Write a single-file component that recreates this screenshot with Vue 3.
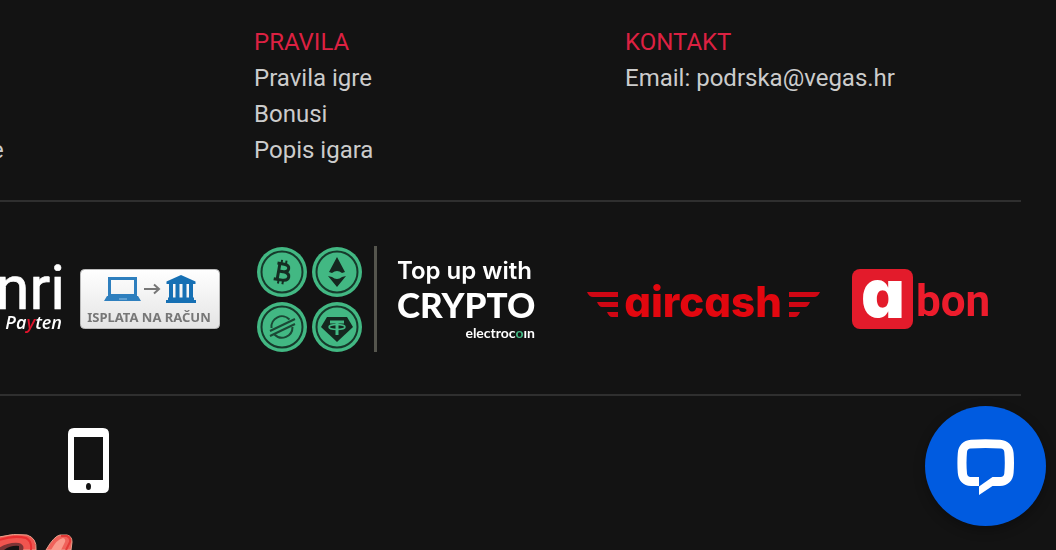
<script setup>
const rules = ['Pravila igre', 'Bonusi', 'Popis igara']
</script>

<template>
  <footer class="footer">
    <div class="inner">
      <nav class="columns">
        <ul class="edge">
          <li><a href="#">e</a></li>
        </ul>
        <section>
          <h2>PRAVILA</h2>
          <ul>
            <li v-for="rule in rules" :key="rule"><a href="#">{{ rule }}</a></li>
          </ul>
        </section>
        <section>
          <h2>KONTAKT</h2>
          <p>Email: <a href="mailto:podrska@vegas.hr">podrska@vegas.hr</a></p>
        </section>
      </nav>

      <div class="payments">
        <svg class="logo" width="64" height="106" viewBox="0 0 64 106" aria-label="Monri Payten">
          <text x="65" y="63" text-anchor="end" font-family="Roboto" font-size="61" fill="#fff" stroke="#fff" stroke-width="0.6">nri</text>
          <text x="62" y="83" text-anchor="end" font-family="Open Sans" font-size="18" font-weight="600" font-style="italic" fill="#fff">Pa<tspan fill="#e0142c">y</tspan>ten</text>
        </svg>

        <svg class="logo" width="140" height="60" viewBox="0 0 140 60" aria-label="Isplata na račun">
          <defs>
            <linearGradient id="plate" x1="0" y1="0" x2="0" y2="1">
              <stop offset="0" stop-color="#fff" />
              <stop offset="1" stop-color="#e4e4e4" />
            </linearGradient>
          </defs>
          <rect x="0.5" y="0.5" width="139" height="59" rx="4" fill="url(#plate)" stroke="#bbb" />
          <path d="M28 8h29v20H28zM31 11v14h23V11z" fill="#2e7fbe" fill-rule="evenodd" />
          <path d="M27 27h31l3 5H24z" fill="#2e7fbe" />
          <path d="M39 30h8" stroke="#8fc0e4" />
          <path d="M64 20h15M74 15.500l5 4.500-5 4.500" fill="none" stroke="#777" stroke-width="2" />
          <path d="M101 6l14.500 6.500v2.500h-29v-2.500zM89 15h4v14h-4zM95.500 15h4v14h-4zM102.500 15h4v14h-4zM109 15h4v14h-4zM88 28.500h26v2.500h2v3H86v-3h2z" fill="#1670b4" />
          <text x="69" y="53" text-anchor="middle" font-family="Noto Sans" font-size="13" font-weight="700" fill="#777">ISPLATA NA RAČUN</text>
        </svg>

        <svg class="logo" width="320" height="108" viewBox="0 0 320 108" aria-label="Top up with crypto, electrocoin">
          <g fill="#42b883">
            <circle cx="46" cy="27" r="25" /><circle cx="101" cy="27" r="25" />
            <circle cx="46" cy="82" r="25" /><circle cx="101" cy="82" r="25" />
          </g>
          <g fill="none" stroke="#163a2b" stroke-width="2">
            <circle cx="46" cy="27" r="20.500" /><circle cx="101" cy="27" r="20.500" />
            <circle cx="46" cy="82" r="20.500" /><circle cx="101" cy="82" r="20.500" />
          </g>
          <g transform="rotate(10 46 27)" fill="none" stroke="#152c22">
            <path d="M42.500 19.500v15M40 19h7q5 0 5 3.700t-5 3.800h-4.500h5q6 .3 6 4.300t-6 4.200H39" stroke-width="3" />
            <path d="M44 15v4M48.500 15v4M44 35v4M48.500 35v4" stroke-width="2" />
          </g>
          <path d="M101 12l8 15-3 1q-5-4-10 0l-3-1zM92 31l4 1q5 4 10 0l4-1-9 11z" fill="#15271f" />
          <g fill="none" stroke="#1b4835" stroke-width="2">
            <path d="M35.500 83a10.500 10.500 0 0 1 18-8.500M56.500 82a10.500 10.500 0 0 1-18 7.500" />
            <path d="M34 86l25-12M34 91l25-12" />
          </g>
          <path d="M91 72h20l6 10-16 15-16-15z" fill="#15271f" />
          <path d="M94 77h14M101 77v13" stroke="#42b883" stroke-width="3" />
          <ellipse cx="101" cy="82" rx="8" ry="2.500" fill="none" stroke="#42b883" stroke-width="1.500" />
          <rect x="138" y="1" width="3" height="106" fill="#55554d" />
          <g fill="#fff">
            <text x="161" y="34" font-family="Inter" font-size="24" font-weight="600">Top up with</text>
            <text x="161" y="73" font-family="Lato" font-size="35" font-weight="900">CRYPTO</text>
            <text x="299" y="93" font-family="Lato" font-size="14" font-weight="700" text-anchor="end">electroc<tspan fill="#42b883">o</tspan>ın</text>
          </g>
        </svg>

        <svg class="logo single" width="264" height="60" viewBox="0 0 264 60" aria-label="aircash">
          <g fill="#cf0714">
            <path d="M15 23h31v5H21q-4 0-6-5zM25 33h21v5H30q-3 0-5-5zM35 43h11v5h-6q-3 0-5-5z" />
            <path d="M248 23h-31v5h25q4 0 6-5zM238 33h-21v5h16q3 0 5-5zM228 43h-11v5h6q3 0 5-5z" />
          </g>
          <text x="131" y="48" text-anchor="middle" font-family="Inter" font-size="42" font-weight="800" fill="#e3070f">aircash</text>
        </svg>

        <svg class="logo single" width="138" height="60" viewBox="0 0 138 60" aria-label="abon">
          <rect width="61" height="60" rx="8" fill="#e31b2b" />
          <text x="31" y="49" text-anchor="middle" font-family="Inter" font-size="68" font-weight="900" fill="#fff">a</text>
          <text x="64" y="47" font-family="Roboto" font-size="44" font-weight="700" fill="#ec1c2c">bon</text>
        </svg>
      </div>

      <div class="apps">
        <a href="#" aria-label="Mobile">
          <svg width="41" height="65" viewBox="0 0 41 65">
            <path d="M6 0h29q6 0 6 6v53q0 6-6 6H6q-6 0-6-6V6q0-6 6-6zM6 9v43h29V9z" fill="#fff" fill-rule="evenodd" />
            <ellipse cx="20.500" cy="58.500" rx="2.500" ry="3.500" fill="#131313" />
          </svg>
        </a>
      </div>
    </div>

    <svg class="emblem" width="76" height="16" viewBox="0 0 76 16" aria-hidden="true">
      <path d="M-1 3Q14-1 27 1q10 3 9 15H-1z" fill="#f0554f" stroke="#e6a08c" />
      <path d="M-1 6Q14 1 26 4q6 3 5 12" fill="none" stroke="#e92f30" stroke-width="2" />
      <path d="M-1 14Q8 8 19 9q6 2 4 7H-1z" fill="#7d3435" />
      <path d="M4 16q7-5 15-4v4z" fill="#131313" />
      <path d="M46 16Q54 2 60 1h7q5 1 5 7l-1 8z" fill="#f0625a" stroke="#e6a08c" />
      <path d="M51 16Q57 5 63 4q4 1 1 6l-3 6z" fill="#fa9a8c" />
      <path d="M61 2h6q4 2 3 6l-4 8" fill="none" stroke="#e33b38" stroke-width="2" />
    </svg>
  </footer>

  <button class="chat" type="button" aria-label="Chat">
    <svg width="58" height="56" viewBox="0 0 58 56">
      <path d="M14 .8Q28.500-.4 43 .8C51 1.500 56 6.500 56.600 14q.8 10 0 20C56 42 51 46.600 43 47h-7.500L22 56v-9h-8C6 46.500 1.500 42 .8 34q-.8-10 0-20C1.500 6.500 6 1.500 14 .8zM13.500 9.500Q10.400 9.700 10 13q-1 11 0 21.500.4 3.200 3.500 3.500H22v9.500L35.500 38h8q3.500-.3 3.800-3.500 1-11 0-21.500-.3-3.300-3.800-3.500-15-1.200-30 0z" fill="#fff" fill-rule="evenodd" />
    </svg>
  </button>
</template>

<style>
body {
  margin: 0;
  background: #131313;
  overflow: hidden;
}
</style>

<style scoped>
.footer {
  background: #131313;
  color: #ccc;
  font: 24px/36px Roboto, sans-serif;
}
.inner {
  margin-right: 35px;
}
.columns {
  display: grid;
  grid-template-columns: 254px 371px 1fr;
  padding: 24px 0 32px;
  border-bottom: 2px solid #2f2f2f;
}
h2 {
  margin: 0;
  font: inherit;
  color: #dc2142;
}
p,
ul {
  margin: 0;
  padding: 0;
  list-style: none;
}
.edge {
  align-self: end;
  margin-left: -9px;
}
a {
  color: inherit;
  text-decoration: none;
}
.payments {
  display: flex;
  align-items: center;
  gap: 16px;
  padding: 43px 0 41px;
  border-bottom: 2px solid #2f2f2f;
}
.logo {
  flex: none;
  filter: blur(0.5px);
}
.single {
  font-feature-settings: "cv11";
}
.apps {
  padding: 32px 0 0 68px;
}
.apps a,
.apps svg,
.emblem {
  display: block;
}
.emblem {
  margin-top: 41px;
}
.chat {
  position: fixed;
  right: 10px;
  bottom: 24px;
  display: grid;
  place-items: center;
  width: 121px;
  height: 120px;
  padding: 2px 0 0;
  border: 0;
  border-radius: 50%;
  background: #005be0;
  box-shadow: 0 4px 12px rgba(0, 0, 0, 0.3);
}
</style>
